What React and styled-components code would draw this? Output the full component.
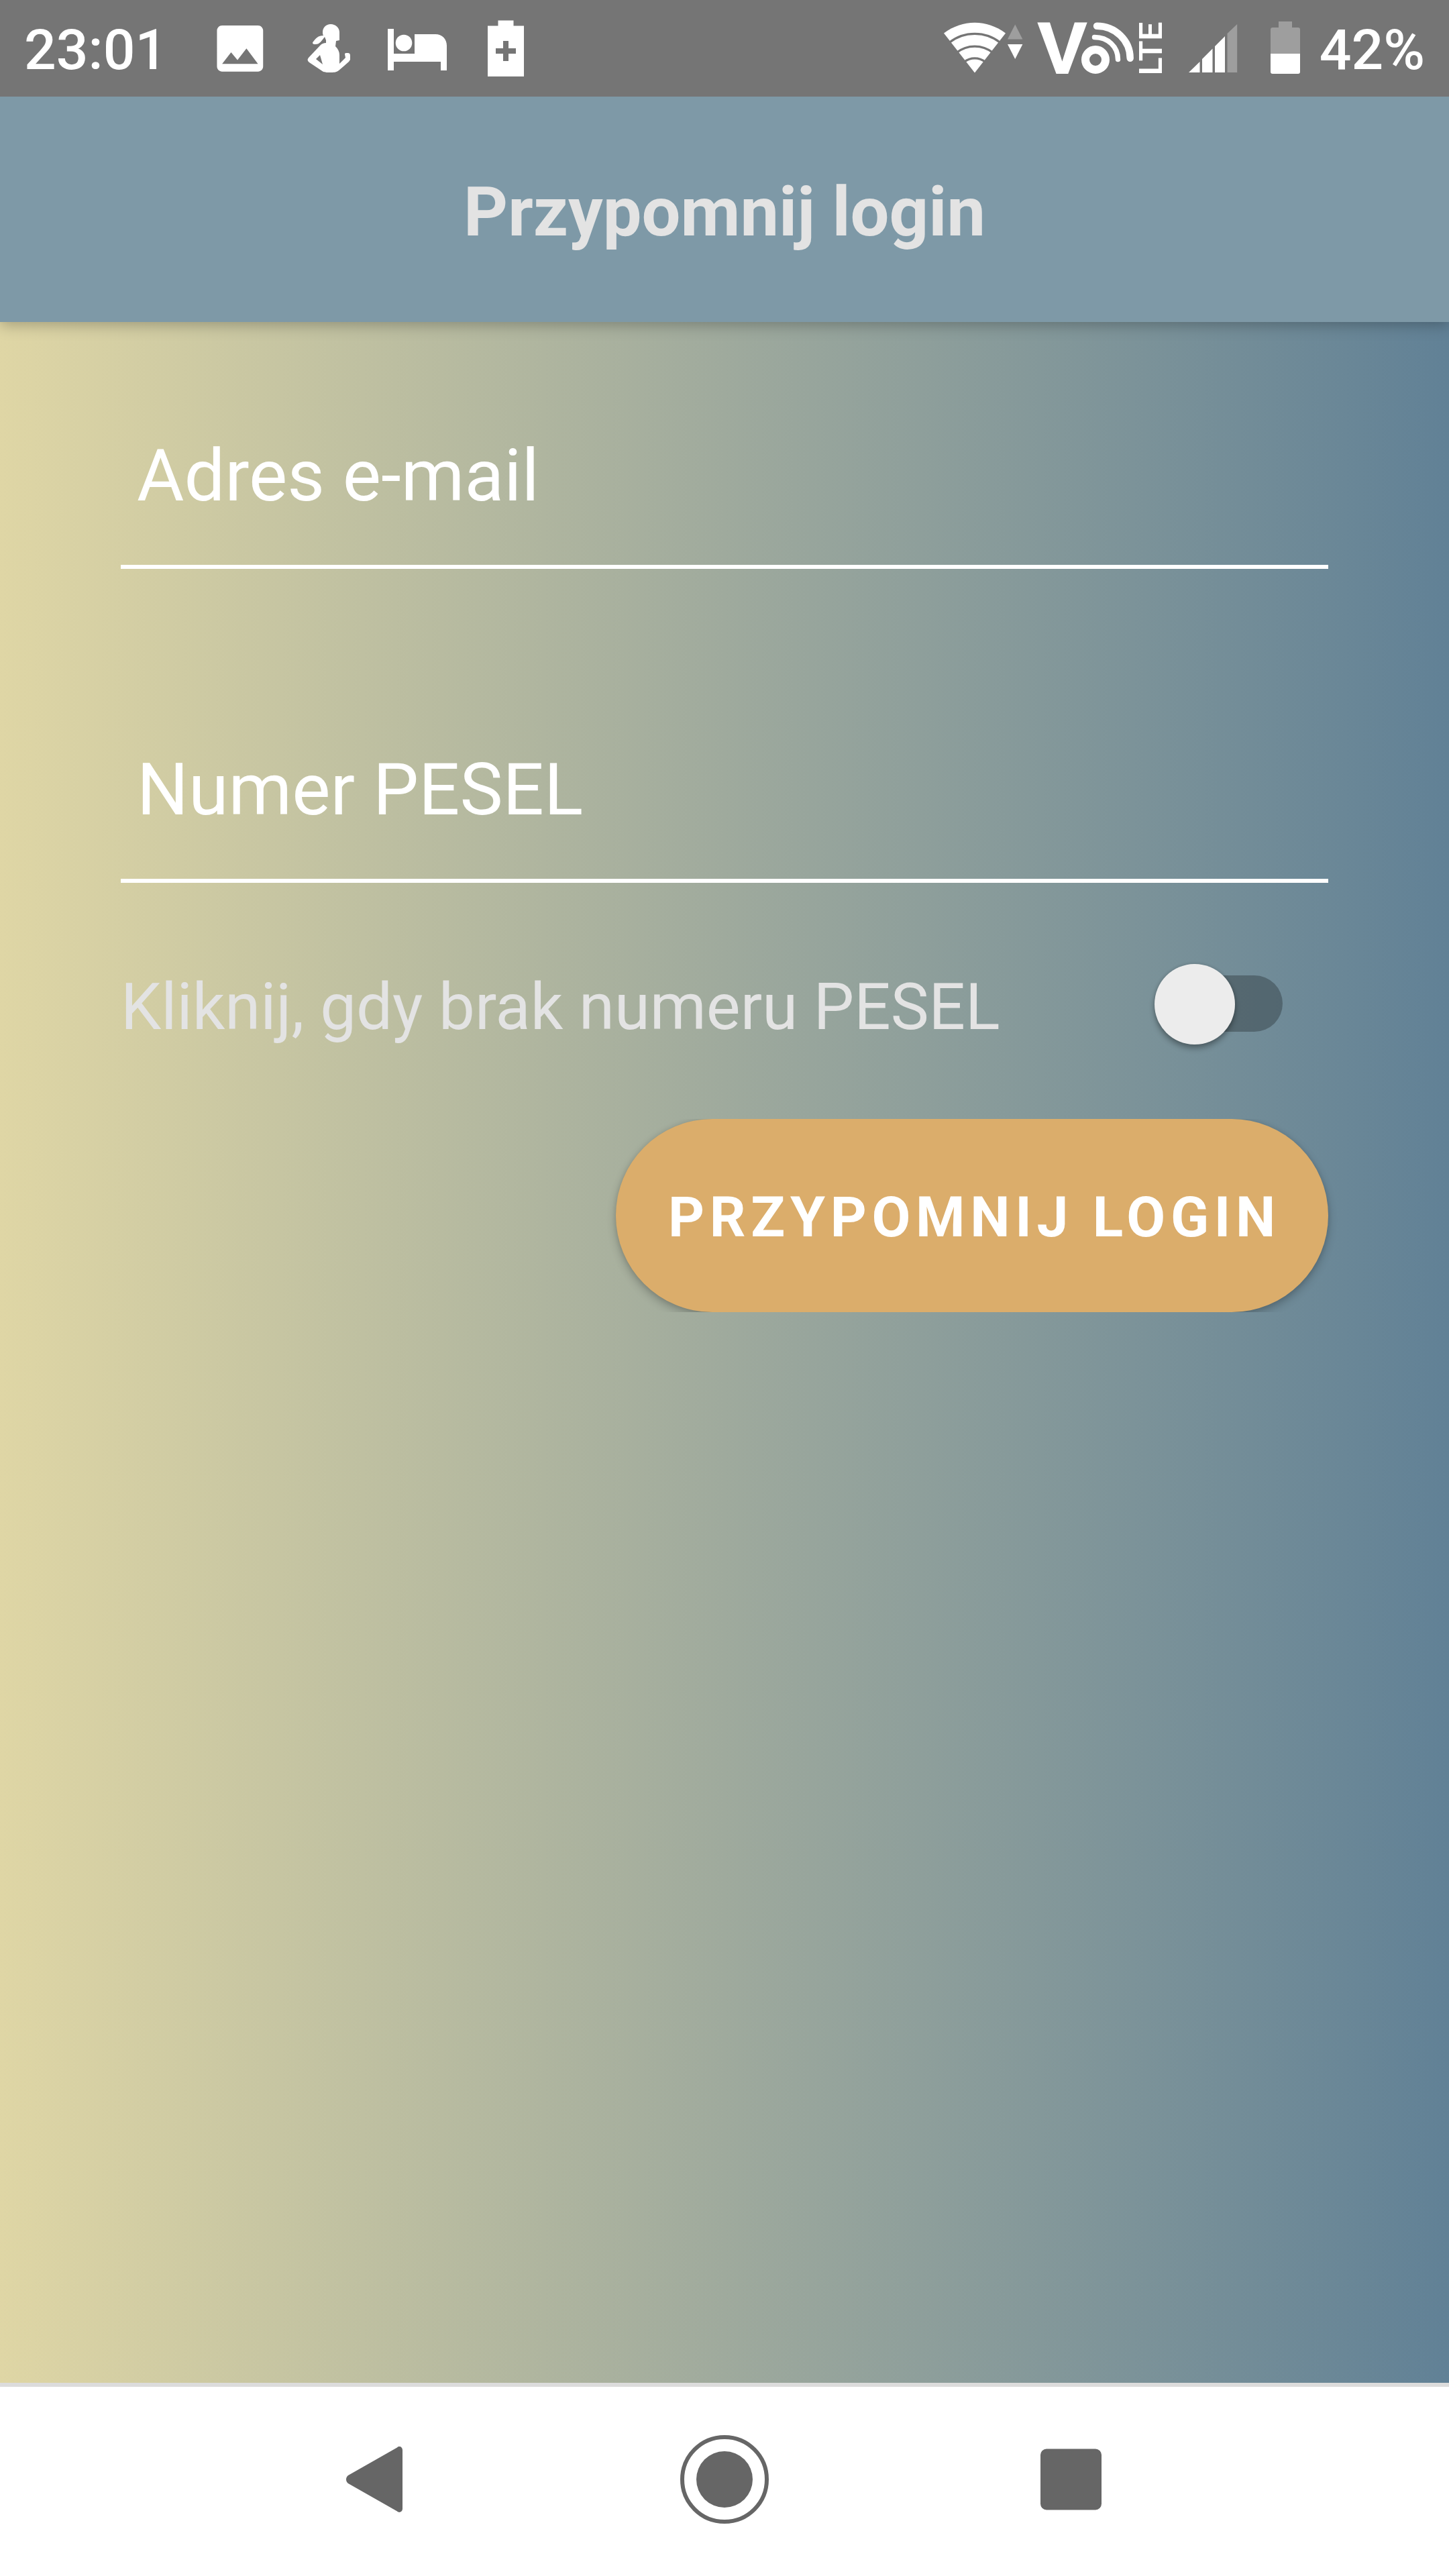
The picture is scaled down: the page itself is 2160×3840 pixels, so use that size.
import React from 'react';
import styled, { createGlobalStyle } from 'styled-components';

const Global = createGlobalStyle`
  * { box-sizing: border-box; }
  body { margin: 0; font-family: Roboto, "Noto Sans", sans-serif; }
`;

const Screen = styled.div`
  width: 2160px;
  height: 3840px;
  display: flex;
  flex-direction: column;
  overflow: hidden;
`;

const StatusBar = styled.header`
  height: 144px;
  flex: none;
  display: flex;
  align-items: flex-start;
  justify-content: space-between;
  padding: 0 36px;
  background: #757575;
  color: #fff;
  z-index: 2;
`;

const StatusGroup = styled.div`
  display: flex;
  height: 144px;
`;

const StatusText = styled.span`
  font-size: 84px;
  font-weight: 500;
  line-height: 100px;
  padding-top: 25px;
  width: ${(p) => p.$width}px;
  text-align: ${(p) => p.$align || 'left'};
  white-space: nowrap;
`;

const StatusIcon = styled.svg`
  flex: none;
  width: ${(p) => p.$width}px;
  height: 144px;
  margin-left: ${(p) => p.$gap || 0}px;
  overflow: visible;
  fill: #fff;
`;

const AppBar = styled.div`
  height: 336px;
  flex: none;
  display: flex;
  justify-content: center;
  background: #7e99a7;
  box-shadow: 0 5px 20px rgba(0, 0, 0, 0.25);
  z-index: 1;
`;

const Title = styled.h1`
  margin: 0;
  padding-top: 112px;
  font-size: 102.7px;
  line-height: 121px;
  font-weight: 700;
  color: #e3e3e3;
  white-space: nowrap;
`;

const Content = styled.main`
  flex: 1;
  display: flex;
  flex-direction: column;
  padding: 0 180px;
  background: linear-gradient(90deg, #dfd6a5 0%, #9faa9d 50%, #618196 100%);
`;

const Field = styled.label`
  height: ${(p) => p.$height}px;
  display: flex;
  align-items: flex-end;
  padding: 0 0 70px 24px;
  border-bottom: 6px solid #fff;
  font-size: 108px;
  line-height: 126px;
  color: #fff;
`;

const SwitchRow = styled.div`
  height: 352px;
  display: flex;
  justify-content: space-between;
`;

const SwitchLabel = styled.span`
  padding-top: 129px;
  font-size: 95.85px;
  line-height: 112px;
  color: #e3e3e3;
  white-space: nowrap;
`;

const Track = styled.div`
  width: 172px;
  height: 84px;
  margin: 138px 68px 0 0;
  border-radius: 42px;
  background: rgba(0, 0, 0, 0.26);
  display: flex;
  align-items: center;
`;

const Thumb = styled.div`
  flex: none;
  width: 120px;
  height: 120px;
  margin-left: -19px;
  margin-top: 2px;
  border-radius: 50%;
  background: #ececec;
  box-shadow: 0 6px 9px rgba(0, 0, 0, 0.3), 0 0 5px rgba(0, 0, 0, 0.14);
`;

const ButtonClip = styled.div`
  display: flex;
  justify-content: flex-end;
  overflow: hidden;
  margin-right: -60px;
  padding-right: 60px;
`;

const Button = styled.button`
  width: 1062px;
  height: 288px;
  border: 0;
  border-radius: 144px;
  padding: 5px 0 0;
  background: #dbad6b;
  color: #fff;
  font-family: inherit;
  font-size: 84px;
  font-weight: 700;
  letter-spacing: 7.7px;
  text-indent: 7px;
  line-height: 98px;
  white-space: nowrap;
  box-shadow: 0 6px 14px rgba(0, 0, 0, 0.24), 0 0 6px rgba(0, 0, 0, 0.08);
`;

const NavBar = styled.nav`
  height: 288px;
  flex: none;
  display: flex;
  align-items: center;
  justify-content: space-between;
  padding: 0 518px 0 516px;
  border-top: 6px solid #dcdcdc;
  background: #fff;
`;

const NavIcon = styled.svg`
  width: ${(p) => p.$width}px;
  height: 132px;
  margin-top: -6px;
  margin-left: ${(p) => p.$gap || 0}px;
  overflow: visible;
  fill: #666;
`;

const ImageIcon = () => (
  <StatusIcon $width={92} $gap={66} viewBox="0 0 92 144">
    <g transform="translate(0 26.5) scale(3.82)">
      <path d="M21 19V5c0-1.1-.9-2-2-2H5c-1.1 0-2 .9-2 2v14c0 1.1.9 2 2 2h14c1.1 0 2-.9 2-2zM8.5 13.5l2.5 3.01L14.5 12l4.5 6H5l3.5-4.5z" />
    </g>
  </StatusIcon>
);

const PersonIcon = () => (
  <StatusIcon $width={66} $gap={54} viewBox="458 0 66 144">
    <path
      fillRule="evenodd"
      d="M493 36c7 0 13 5 13 12l0 6 0 6-5 1-1 8c4 4 6 8 6 13l0 13 9-9-1-5c0-2 1-2 4-2 3 0 4 1 4 4l0 6-2 3-15 13c-4 3-7 3-14 3-6 0-8 0-12-3l-18-12c-3-3-3-4-1-7l17-18c3-3 5-4 9-4l0-4-2-5c-5 6-7 11-14 11-4 0-5-2-3-4 4-5 7-9 15-9-1-2-1-3-1-5 0-7 5-12 12-12zM477 82l-6 6 10 8z"
    />
  </StatusIcon>
);

const BedIcon = () => (
  <StatusIcon $width={88} $gap={54} viewBox="578 0 88 144">
    <path d="M578 43h9v37h31V51h31c10 0 17 7 17 17v37h-9V92h-70v13h-9z" />
    <circle cx="602" cy="64" r="12.3" />
  </StatusIcon>
);

const BatteryPlusIcon = () => (
  <StatusIcon $width={54} $gap={61} viewBox="727 0 54 144">
    <path
      fillRule="evenodd"
      d="M742.500 30.500h23v8H781V114h-54V38.500h15.500zM750 61v11h-11v8h11v11h8V80h11v-8h-11V61z"
    />
  </StatusIcon>
);

const WifiIcon = () => (
  <StatusIcon $width={120} viewBox="1406 0 120 144">
    <path d="M1453 108.500L1407 49.500C1435 28.500 1471 28.500 1499 49.500z" />
    <g fill="none" stroke="#757575" strokeWidth="3.300">
      <path d="M1415 63.500c22-17.500 54-17.500 76 0" />
      <path d="M1426 78.500c16-12.500 38-12.500 54 0" />
      <path d="M1437 92.500c10-7.500 22-7.500 32 0" />
    </g>
    <path d="M1502 58.500l11.200-22 11.200 22z" fill="#9e9e9e" />
    <path d="M1502 66l11.200 22 11.200-22z" />
  </StatusIcon>
);

const VolteIcon = () => (
  <StatusIcon $width={188} $gap={20} viewBox="1546 0 188 144" fontFamily="Roboto, sans-serif">
    <text x="1546" y="110" fontSize="107.500" fontWeight="700" textLength="75" lengthAdjust="spacingAndGlyphs">V</text>
    <g fill="none" stroke="#fff" strokeLinecap="round">
      <circle cx="1633" cy="89" r="15" strokeWidth="12" />
      <path d="M1631.500 55.500c20 0 35 14 35 33" strokeWidth="7.500" />
      <path d="M1635 38.800c28 0 49.700 22 49.700 48" strokeWidth="10.400" />
    </g>
    <text
      transform="translate(1732.300 112.500) rotate(-90)"
      fontSize="48.500"
      fontWeight="600"
      textLength="80"
      lengthAdjust="spacingAndGlyphs"
    >
      LTE
    </text>
  </StatusIcon>
);

const SignalIcon = () => (
  <StatusIcon $width={73} $gap={38} viewBox="1772 0 73 144">
    <path d="M1772 108l16.500-16v16zM1792 108V88l15.500-15.500V108zM1811 108V69l15-15v54z" />
    <path d="M1829.500 108V50l14.700-14v72z" fill="#9e9e9e" />
  </StatusIcon>
);

const BatteryIcon = () => (
  <StatusIcon $width={44} $gap={49} viewBox="1894 0 44 144">
    <path d="M1906 32h20v9h9c2 0 3 1 3 3v36h-44V44c0-2 1-3 3-3h9z" fill="#9e9e9e" />
    <path d="M1894 80h44v27c0 2-1 3-3 3h-38c-2 0-3-1-3-3z" />
  </StatusIcon>
);

export default function App() {
  return (
    <>
      <Global />
      <Screen>
        <StatusBar>
          <StatusGroup>
            <StatusText $width={210}>23:01</StatusText>
            <ImageIcon />
            <PersonIcon />
            <BedIcon />
            <BatteryPlusIcon />
          </StatusGroup>
          <StatusGroup>
            <WifiIcon />
            <VolteIcon />
            <SignalIcon />
            <BatteryIcon />
            <StatusText $width={186} $align="right">42%</StatusText>
          </StatusGroup>
        </StatusBar>
        <AppBar>
          <Title>Przypomnij login</Title>
        </AppBar>
        <Content>
          <Field $height={368}>Adres e-mail</Field>
          <Field $height={468}>Numer PESEL</Field>
          <SwitchRow>
            <SwitchLabel>Kliknij, gdy brak numeru PESEL</SwitchLabel>
            <Track>
              <Thumb />
            </Track>
          </SwitchRow>
          <ButtonClip>
            <Button>PRZYPOMNIJ LOGIN</Button>
          </ButtonClip>
        </Content>
        <NavBar>
          <NavIcon $width={84} viewBox="0 0 84 132">
            <path d="M76 18.500c3-3 8-1 8 4v87c0 5-5 7-8 4L3 72c-4-3-4-9 0-12z" />
          </NavIcon>
          <NavIcon $width={132} $gap={9} viewBox="0 0 132 132">
            <circle cx="66" cy="66" r="63" fill="none" stroke="#666" strokeWidth="6" />
            <circle cx="66" cy="66" r="42" />
          </NavIcon>
          <NavIcon $width={91} viewBox="0 0 91 132">
            <rect y="20.500" width="91" height="91" rx="9" />
          </NavIcon>
        </NavBar>
      </Screen>
    </>
  );
}
